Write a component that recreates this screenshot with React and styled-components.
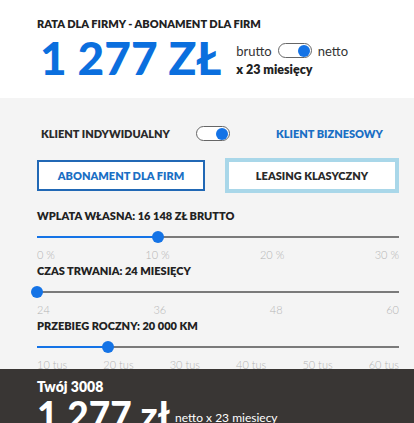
import React, { useState } from "react";
import styled, { createGlobalStyle } from "styled-components";

const GlobalStyle = createGlobalStyle`
  body {
    margin: 0;
    font-family: "Lato", "Open Sans", sans-serif;
    background: #f4f4f4;
    color: #222;
  }
  * { box-sizing: border-box; }
`;

const Header = styled.div`
  background: #fff;
  padding: 17px 37px 0;
  height: 98px;
`;

const Caption = styled.h4`
  margin: 0;
  font-size: 11px;
  font-weight: 800;
  color: #222;
  text-transform: uppercase;
  line-height: 14px;
`;

const PriceRow = styled.div`
  display: flex;
  align-items: center;
  gap: 15px;
  margin-top: 2px;
`;

const BigPrice = styled.div`
  font-size: 46px;
  font-weight: 900;
  color: #0b6fde;
  padding-left: 3px;
  line-height: 50px;
`;

const PriceInfo = styled.div`
  display: flex;
  flex-direction: column;
  gap: 3px;
  padding-top: 3px;
`;

const SwitchRow = styled.div`
  display: flex;
  align-items: center;
  gap: 6px;
  font-size: 13px;
  color: #333;
`;

const Months = styled.div`
  font-size: 12.5px;
  font-weight: 800;
  color: #222;
`;

const Toggle = styled.button`
  width: 34px;
  height: 15px;
  border: 1px solid #666;
  border-radius: 8px;
  background: #fff;
  padding: 0 1px;
  display: flex;
  align-items: center;
  justify-content: ${(p) => (p.on ? "flex-end" : "flex-start")};
  cursor: pointer;

  &::after {
    content: "";
    width: 12px;
    height: 12px;
    border-radius: 50%;
    background: #1473e6;
  }
`;

const Body = styled.div`
  padding: 27px 15px 0 37px;
`;

const ClientRow = styled.div`
  display: flex;
  align-items: center;
  padding-left: 4px;
  height: 17px;
`;

const ClientLabel = styled.span`
  font-size: 11px;
  font-weight: 800;
  color: ${(p) => (p.active ? "#1a6fc4" : "#2a2a2a")};
  text-transform: uppercase;
`;

const ClientToggle = styled(Toggle)`
  margin: 0 46px 0 26px;
`;

const Tabs = styled.div`
  display: flex;
  align-items: center;
  gap: 20px;
  margin-top: 16px;
`;

const Tab = styled.button`
  width: ${(p) => (p.selected ? "169px" : "175px")};
  height: ${(p) => (p.selected ? "31px" : "35px")};
  background: #fff;
  border: ${(p) => (p.selected ? "2px solid #2168b5" : "4px solid #a9d7e9")};
  color: ${(p) => (p.selected ? "#1a6fc4" : "#2a2a2a")};
  font-family: "Lato", sans-serif;
  font-size: 11px;
  font-weight: 800;
  text-transform: uppercase;
  cursor: pointer;
`;

const SliderBlock = styled.div`
  margin-top: ${(p) => p.gap || 0}px;
`;

const SliderLabel = styled.div`
  font-size: 11px;
  font-weight: 800;
  color: #222;
  text-transform: uppercase;
  height: 14px;
  line-height: 14px;
`;

const Track = styled.div`
  position: relative;
  height: 2px;
  background: #7a7a7a;
  margin-top: 13px;
`;

const Fill = styled.div`
  height: 100%;
  background: #1473e6;
`;

const Thumb = styled.span`
  position: absolute;
  top: -5px;
  width: 12px;
  height: 12px;
  margin-left: -6px;
  border-radius: 50%;
  background: #1473e6;
`;

const Ticks = styled.div`
  display: flex;
  justify-content: space-between;
  margin-top: 11px;
  font-size: 11px;
  font-weight: 300;
  color: #b5b5b5;
  line-height: 12px;
`;

/* sticky summary pinned over the bottom of the configurator */
const SummaryBar = styled.div`
  position: fixed;
  left: 0;
  right: 0;
  bottom: 0;
  height: 54px;
  overflow: hidden;
  background: #393634;
  color: #fff;
  padding: 11px 37px 0;
`;

const Model = styled.div`
  font-size: 14px;
  font-weight: 800;
  line-height: 14px;
`;

const SummaryPrice = styled.div`
  display: flex;
  align-items: flex-start;
  gap: 5px;
  margin-top: 2px;
`;

const SummaryAmount = styled.span`
  font-size: 37px;
  font-weight: 900;
  line-height: 37px;
`;

const SummaryNote = styled.span`
  font-size: 12px;
  font-weight: 400;
  line-height: 14px;
  margin-top: 15px;
`;

const sliders = [
  {
    label: "Wplata własna: 16 148 zł brutto",
    value: 33.3,
    ticks: ["0 %", "10 %", "20 %", "30 %"],
    gap: 16,
  },
  {
    label: "Czas trwania: 24 miesięcy",
    value: 0,
    ticks: ["24", "36", "48", "60"],
    gap: 3,
  },
  {
    label: "Przebieg roczny: 20 000 km",
    value: 19.6,
    ticks: ["10 tus", "20 tus", "30 tus", "40 tus", "50 tus", "60 tus"],
    gap: 3,
  },
];

const App = () => {
  const [netto, setNetto] = useState(true);
  const [business, setBusiness] = useState(true);
  const [offer, setOffer] = useState("abo");

  return (
    <>
      <GlobalStyle />
      <Header>
        <Caption>Rata dla firmy - Abonament dla firm</Caption>
        <PriceRow>
          <BigPrice>1 277 ZŁ</BigPrice>
          <PriceInfo>
            <SwitchRow>
              brutto
              <Toggle on={netto} onClick={() => setNetto(!netto)} />
              netto
            </SwitchRow>
            <Months>x 23 miesięcy</Months>
          </PriceInfo>
        </PriceRow>
      </Header>

      <Body>
        <ClientRow>
          <ClientLabel active={!business}>Klient indywidualny</ClientLabel>
          <ClientToggle on={business} onClick={() => setBusiness(!business)} />
          <ClientLabel active={business}>Klient biznesowy</ClientLabel>
        </ClientRow>

        <Tabs>
          <Tab selected={offer === "abo"} onClick={() => setOffer("abo")}>
            Abonament dla firm
          </Tab>
          <Tab selected={offer === "leasing"} onClick={() => setOffer("leasing")}>
            Leasing klasyczny
          </Tab>
        </Tabs>

        {sliders.map((s) => (
          <SliderBlock key={s.label} gap={s.gap}>
            <SliderLabel>{s.label}</SliderLabel>
            <Track>
              <Fill style={{ width: `${s.value}%` }} />
              <Thumb style={{ left: `${s.value}%` }} />
            </Track>
            <Ticks>
              {s.ticks.map((t) => (
                <span key={t}>{t}</span>
              ))}
            </Ticks>
          </SliderBlock>
        ))}
      </Body>

      <SummaryBar>
        <Model>Twój 3008</Model>
        <SummaryPrice>
          <SummaryAmount>1 277 zł</SummaryAmount>
          <SummaryNote>netto x 23 miesiecy</SummaryNote>
        </SummaryPrice>
      </SummaryBar>
    </>
  );
};

export default App;
